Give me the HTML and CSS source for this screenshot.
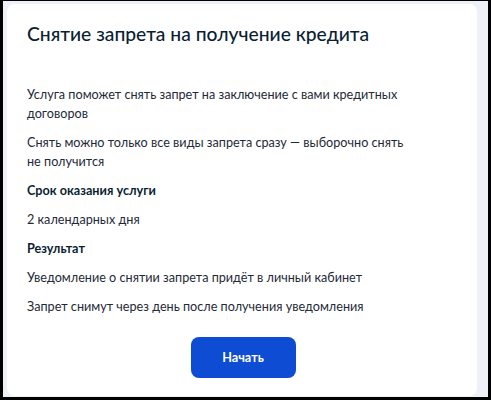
FILE: index.html
```html
<!DOCTYPE html>
<html lang="ru">
<head>
<meta charset="utf-8">
<title>Снятие запрета на получение кредита</title>
<link rel="stylesheet" href="styles.css">
</head>
<body>
<div class="frame">
  <section class="card">
    <h1 class="title">Снятие запрета на получение кредита</h1>
    <hr class="divider">
    <div class="content">
      <p class="text">Услуга поможет снять запрет на заключение с вами кредитных договоров</p>
      <p class="text">Снять можно только все виды запрета сразу — выборочно снять не получится</p>
      <p class="text bold">Срок оказания услуги</p>
      <p class="text">2 календарных дня</p>
      <p class="text bold">Результат</p>
      <p class="text">Уведомление о снятии запрета придёт в личный кабинет</p>
      <p class="text">Запрет снимут через день после получения уведомления</p>
    </div>
    <div class="actions">
      <button class="btn" type="button">Начать</button>
    </div>
  </section>
</div>
</body>
</html>
```
FILE: styles.css
```css
html, body {
  margin: 0;
  padding: 0;
  background: #000;
}
body {
  font-family: Lato, "Noto Sans", sans-serif;
  color: #0b1f33;
}
.frame {
  margin: 1px 3px 0 3px;
  height: 396px;
  box-sizing: border-box;
  padding: 3px 11px 1px 4px;
  background: #eef2f8;
  display: flex;
}
.card {
  flex: 1;
  background: #fff;
  border-radius: 8px;
  padding: 16px 18px 19px 20px;
  display: flex;
  flex-direction: column;
}
.title {
  margin: 0;
  font-size: 19.25px;
  line-height: 28px;
  font-weight: 500;
  color: #0b1f33;
}
.divider {
  margin: 20px 0 0 0;
  border: 0;
  height: 1px;
  background: #b9c9ee;
}
.content {
  margin-top: 17px;
  display: flex;
  flex-direction: column;
  gap: 10px;
}
.text {
  margin: 0;
  font-size: 12.65px;
  line-height: 19px;
  color: #1e2a37;
  max-width: 385px;
}
.bold {
  font-weight: 700;
  color: #0b1f33;
}
.actions {
  margin-top: 21px;
  display: flex;
  justify-content: center;
}
.btn {
  width: 105px;
  height: 41px;
  border: 0;
  border-radius: 8px;
  background: #0d4cd3;
  color: #fff;
  font-family: Lato, "Noto Sans", sans-serif;
  font-size: 12.65px;
  font-weight: 700;
}
```
